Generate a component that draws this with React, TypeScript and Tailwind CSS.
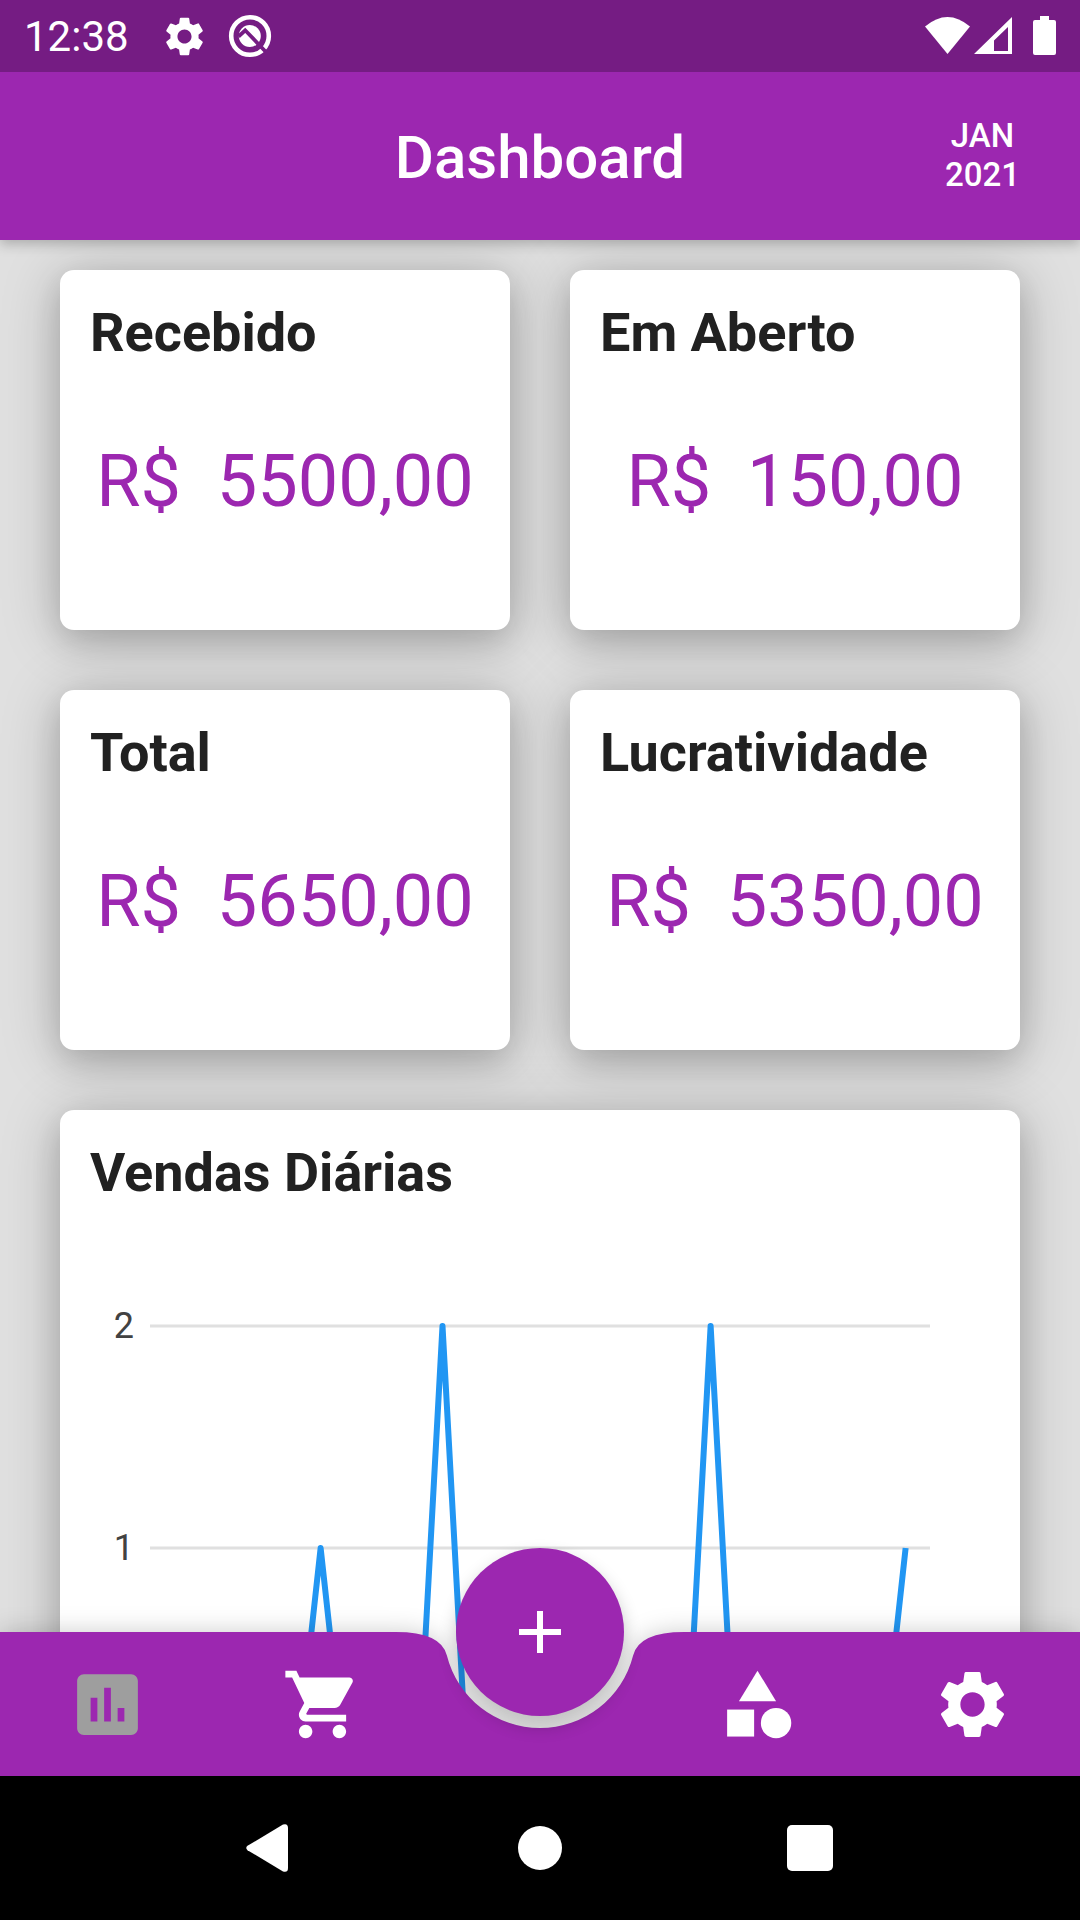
import React from "react";
import { MdAdd, MdAssessment, MdCategory, MdSettings, MdShoppingCart } from "react-icons/md";

const cards = [
  { title: "Recebido", value: "R$  5500,00" },
  { title: "Em Aberto", value: "R$  150,00" },
  { title: "Total", value: "R$  5650,00" },
  { title: "Lucratividade", value: "R$  5350,00" },
];

const sales: Record<number, number> = { 7: 1, 12: 2, 23: 2, 31: 1 };
const days = Array.from({ length: 31 }, (_, i) => i + 1);
const axisX = 60;
const dayWidth = 24.375;
const zeroY = 566;
const unit = 222;
const linePoints = days
  .map((d) => `${axisX + d * dayWidth},${zeroY - (sales[d] ?? 0) * unit}`)
  .join(" ");

const cardShadow = "rounded-[14px] bg-white shadow-[0_12px_30px_rgba(0,0,0,0.14),0_6px_60px_rgba(0,0,0,0.22)]";
const cardTitle = "text-[54px] leading-[66px] font-bold text-[#212121]";

function StatusBar() {
  return (
    <div className="relative z-20 flex h-[72px] shrink-0 items-center justify-between bg-[#751c83] px-6 text-white">
      <div className="flex items-center">
        <span className="pt-0.5 text-[42px] leading-[48px]">12:38</span>
        <MdSettings className="ml-8 size-[47px]" />
        <svg viewBox="0 0 48 48" className="ml-[18px] size-12" aria-hidden="true">
          <circle cx="24" cy="24" r="18.8" fill="none" stroke="currentColor" strokeWidth="4.600" />
          <circle cx="23.800" cy="24" r="11" fill="currentColor" />
          <path d="M12.500 24.500L19.200 18.300L39.500 39.500" fill="none" stroke="#751c83" strokeWidth="3.800" />
        </svg>
      </div>
      <svg viewBox="0 0 132 40" className="h-10 w-[132px]" fill="currentColor" aria-hidden="true">
        <path d="M1 10.5Q23.500 -8.500 46 10.500L23.500 38Z" />
        <path fillRule="evenodd" d="M50 38L88 1V38ZM70 35H84V11L70 24.500Z" />
        <path d="M116 0H125V4H130Q132 4 132 6V37Q132 39 130 39H111Q109 39 109 37V6Q109 4 111 4H116Z" />
      </svg>
    </div>
  );
}

function SalesChart() {
  return (
    <svg viewBox="0 0 900 640" className="block w-full" role="img" aria-label="Vendas Diárias">
      <line x1={axisX} x2="840" y1={zeroY} y2={zeroY} stroke="#e0e0e0" strokeWidth="3" />
      {[1, 2].map((v) => (
        <g key={v}>
          <line x1={axisX} x2="840" y1={zeroY - v * unit} y2={zeroY - v * unit} stroke="#e0e0e0" strokeWidth="3" />
          <text x="44" y={zeroY - v * unit + 12} textAnchor="end" fontSize="36" fill="#424242">
            {v}
          </text>
        </g>
      ))}
      <polyline points={linePoints} fill="none" stroke="#2196f3" strokeWidth="6" strokeLinejoin="round" />
    </svg>
  );
}

function NavButton({ label, className, children }: { label: string; className: string; children: React.ReactNode }) {
  return (
    <button type="button" aria-label={label} className={`flex items-center justify-center ${className}`}>
      {children}
    </button>
  );
}

function BottomBar() {
  return (
    <nav className="relative z-10 h-36 shrink-0">
      <div className="absolute inset-0 flex text-[#9c27b0] drop-shadow-[0_0_12px_rgba(0,0,0,0.2)]">
        <div className="flex-1 bg-[#9c27b0]" />
        <svg viewBox="0 0 288 144" className="h-36 w-72" fill="currentColor" aria-hidden="true">
          <path d="M0 0Q45 0 50.900 23.500A96 96 0 0 0 237.100 23.500Q243 0 288 0V144H0Z" />
        </svg>
        <div className="flex-1 bg-[#9c27b0]" />
      </div>
      <div className="relative grid h-full grid-cols-[1fr_1fr_220px_1fr_1fr]">
        <NavButton label="Dashboard" className="text-[#9e9e9e]">
          <MdAssessment className="size-[81px]" />
        </NavButton>
        <NavButton label="Vendas" className="text-white">
          <MdShoppingCart className="size-[81px]" />
        </NavButton>
        <NavButton label="Produtos" className="col-start-4 text-white">
          <MdCategory className="size-[81px]" />
        </NavButton>
        <NavButton label="Ajustes" className="text-white">
          <MdSettings className="size-[81px]" />
        </NavButton>
      </div>
      <button
        type="button"
        aria-label="Adicionar"
        className="absolute -top-[84px] left-1/2 flex size-[168px] -translate-x-1/2 items-center justify-center rounded-full bg-[#9c27b0] text-white shadow-[0_9px_18px_rgba(0,0,0,0.24)]"
      >
        <MdAdd className="size-[72px]" />
      </button>
    </nav>
  );
}

function SystemNav() {
  return (
    <div className="z-10 flex h-36 shrink-0 items-center justify-center gap-[222px] bg-black text-white">
      <button type="button" aria-label="Voltar" className="size-12">
        <svg viewBox="0 0 48 48" className="size-12" fill="currentColor" aria-hidden="true">
          <path d="M1.500 21.800L37 .5Q42 -1 42 4V44Q42 49 37 47.500L1.500 26.200Q-1 24 1.500 21.800Z" />
        </svg>
      </button>
      <button type="button" aria-label="Início" className="flex size-12 items-center justify-center">
        <span className="size-11 rounded-full bg-white" />
      </button>
      <button type="button" aria-label="Recentes" className="flex size-12 items-center justify-center">
        <span className="size-[46px] rounded-[5px] bg-white" />
      </button>
    </div>
  );
}

export default function App() {
  return (
    <div className="flex h-screen flex-col overflow-hidden bg-[#e0e0e0] font-['Roboto',sans-serif]">
      <StatusBar />
      <header className="relative z-10 grid h-[168px] shrink-0 grid-cols-[1fr_auto_1fr] items-center bg-[#9c27b0] px-[60px] text-white shadow-[0_4px_12px_rgba(0,0,0,0.24)]">
        <h1 className="col-start-2 pt-1 text-[60px] leading-[72px] font-medium">Dashboard</h1>
        <button type="button" className="flex flex-col items-center justify-self-end pb-0.5 text-[33px] leading-[39px] font-medium">
          <span>JAN</span>
          <span>2021</span>
        </button>
      </header>
      <main className="-mb-36 min-h-0 flex-1 overflow-y-auto [scrollbar-width:none]">
        <div className="grid grid-cols-2 gap-[60px] px-[60px] py-[30px]">
          {cards.map((c) => (
            <section key={c.title} className={`flex h-[360px] flex-col p-[30px] ${cardShadow}`}>
              <h2 className={cardTitle}>{c.title}</h2>
              <p className="flex flex-1 items-center justify-center pb-0.5 text-[72px] leading-[84px] whitespace-pre text-[#9c27b0]">
                {c.value}
              </p>
            </section>
          ))}
          <section className={`col-span-2 p-[30px] ${cardShadow}`}>
            <h2 className={cardTitle}>Vendas Diárias</h2>
            <div className="-mt-0.5">
              <SalesChart />
            </div>
          </section>
        </div>
      </main>
      <BottomBar />
      <SystemNav />
    </div>
  );
}
